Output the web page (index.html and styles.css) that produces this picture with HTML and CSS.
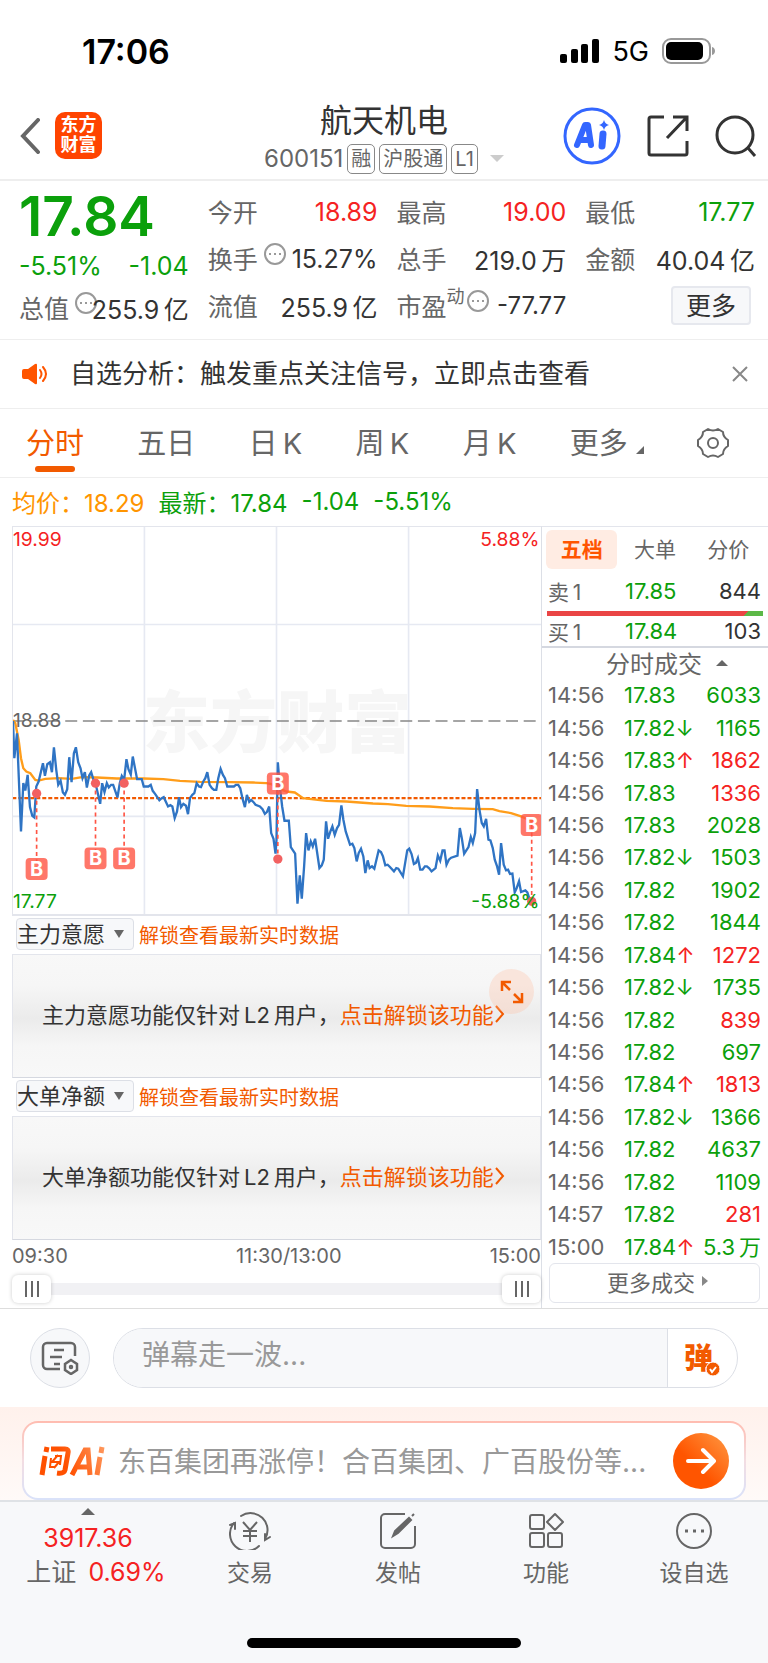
FILE: index.html
```html
<!DOCTYPE html>
<html lang="zh-CN">
<head>
    <meta charset="UTF-8">
    <meta name="viewport" content="width=device-width, initial-scale=1.0">
    <title>航天机电 600151</title>
    <link rel="stylesheet" href="styles.css">
</head>
<body>
    <div class="status-bar">
        <span class="clock">17:06</span>
        <div class="status-icons">
            <svg width="39" height="24" viewBox="0 0 39 24">
                <rect x="0" y="15" width="7" height="9" rx="2"/>
                <rect x="11" y="10" width="7" height="14" rx="2"/>
                <rect x="21" y="5" width="7" height="19" rx="2"/>
                <rect x="32" y="0" width="7" height="24" rx="2"/>
            </svg>
            <span class="network">5G</span>
            <svg width="54" height="26" viewBox="0 0 54 26">
                <rect x="1" y="1" width="47" height="24" rx="8" fill="none" stroke="#999" stroke-width="2"/>
                <rect x="4" y="4" width="37" height="18" rx="5"/>
                <path d="M50 9c4 1 4 7 0 8z" fill="#999"/>
            </svg>
        </div>
    </div>

    <header class="header">
        <div class="header-left">
            <button class="icon-btn" aria-label="返回">
                <svg width="20" height="36" viewBox="0 0 20 36"><path d="M18 2L3 18l15 16" fill="none" stroke="#666" stroke-width="4" stroke-linecap="round"/></svg>
            </button>
            <a class="app-logo" href="#">东方<br>财富</a>
        </div>
        <div class="stock">
            <h1>航天机电</h1>
            <div class="stock-code">
                <span>600151</span>
                <span class="tag">融</span>
                <span class="tag">沪股通</span>
                <span class="tag">L1</span>
                <i class="caret"></i>
            </div>
        </div>
        <div class="header-actions">
            <button class="icon-btn" aria-label="Ai">
                <svg width="58" height="58" viewBox="0 0 58 58">
                    <circle cx="29" cy="29" r="27" fill="none" stroke="#3366ff" stroke-width="3"/>
                    <path d="M14 38l8-20h3l3 20M18 33h9" fill="none" stroke="#3366ff" stroke-width="6" stroke-linejoin="round" stroke-linecap="round"/>
                    <path d="M40 27l-1 12" stroke="#3366ff" stroke-width="7" stroke-linecap="round"/>
                    <path d="M41 13c1 3 2 4 5 5-3 1-4 2-5 5-1-3-2-4-5-5 3-1 4-2 5-5z" fill="#3366ff"/>
                </svg>
            </button>
            <button class="icon-btn" aria-label="分享">
                <svg width="42" height="42" viewBox="0 0 42 42" fill="none" stroke="#333" stroke-width="3">
                    <path d="M17 2H4a2 2 0 0 0-2 2v34a2 2 0 0 0 2 2h34a2 2 0 0 0 2-2V26"/>
                    <path d="M26 2h14v14M40 2L20 23"/>
                </svg>
            </button>
            <button class="icon-btn" aria-label="搜索">
                <svg width="42" height="42" viewBox="0 0 42 42" fill="none" stroke="#333" stroke-width="3">
                    <circle cx="20" cy="20" r="18"/>
                    <path d="M33 33l7 8"/>
                </svg>
            </button>
        </div>
    </header>

    <section class="quote">
        <div class="quote-col quote-main">
            <div class="price down">17.84</div>
            <div class="row change down"><span>-5.51%</span><span>-1.04</span></div>
            <div class="row"><span class="label">总值<svg class="dots" viewBox="0 0 22 22"><circle cx="11" cy="11" r="10"/><path d="M5 11h2M10 11h2M15 11h2"/></svg></span><span>255.9&thinsp;亿</span></div>
        </div>
        <div class="quote-col">
            <div class="row"><span class="label">今开</span><span class="up">18.89</span></div>
            <div class="row"><span class="label">换手<svg class="dots" viewBox="0 0 22 22"><circle cx="11" cy="11" r="10"/><path d="M5 11h2M10 11h2M15 11h2"/></svg></span><span>15.27%</span></div>
            <div class="row"><span class="label">流值</span><span>255.9&thinsp;亿</span></div>
        </div>
        <div class="quote-col">
            <div class="row"><span class="label">最高</span><span class="up">19.00</span></div>
            <div class="row"><span class="label">总手</span><span>219.0&thinsp;万</span></div>
            <div class="row"><span class="label">市盈<sup>动</sup><svg class="dots" viewBox="0 0 22 22"><circle cx="11" cy="11" r="10"/><path d="M5 11h2M10 11h2M15 11h2"/></svg></span><span class="pe">-77.77</span></div>
        </div>
        <div class="quote-col">
            <div class="row"><span class="label">最低</span><span class="down">17.77</span></div>
            <div class="row"><span class="label">金额</span><span>40.04&thinsp;亿</span></div>
            <div class="row row-end"><button class="more-btn">更多</button></div>
        </div>
    </section>

    <section class="notice">
        <svg width="26" height="22" viewBox="0 0 26 22">
            <path d="M2 6h4l7-5q2-1 2 1v18q0 2-2 1l-7-5H2q-2 0-2-2V8q0-2 2-2z" fill="#ff5500"/>
            <path d="M18 7q3 4 0 8M21 4q6 7 0 14" fill="none" stroke="#ff5500" stroke-width="2" stroke-linecap="round"/>
        </svg>
        <p>自选分析：触发重点关注信号，立即点击查看</p>
        <button class="icon-btn" aria-label="关闭">
            <svg width="16" height="16" viewBox="0 0 16 16"><path d="M1 1l14 14M15 1L1 15" stroke="#888" stroke-width="2"/></svg>
        </button>
    </section>

    <nav class="tabs">
        <button class="tab active">分时</button>
        <button class="tab">五日</button>
        <button class="tab">日&thinsp;K</button>
        <button class="tab">周&thinsp;K</button>
        <button class="tab">月&thinsp;K</button>
        <button class="tab tab-more">更多<i></i></button>
        <button class="icon-btn" aria-label="设置">
            <svg width="32" height="32" viewBox="0 0 32 32" fill="none" stroke="#666" stroke-width="2">
                <path d="M11 2q5 3 10 0l5 3q0 5 5 8v6q-5 3-5 8l-5 3q-5-3-10 0l-5-3q0-5-5-8v-6q5-3 5-8z" stroke-linejoin="round"/>
                <circle cx="16" cy="16" r="5"/>
            </svg>
        </button>
    </nav>

    <main class="board">
        <div class="average">
            <span class="orange">均价：18.29</span>
            <span class="down">最新：17.84</span>
            <span class="down">-1.04</span>
            <span class="down">-5.51%</span>
        </div>
        <div class="board-body">
            <div class="charts">
                <svg class="trend" viewBox="38 20 1587 1164">
                    <text class="watermark" x="428" y="680">东方财富</text>
                    <!-- grid -->
                    <path class="grid" d="M433 20V1185M830 20V1185M1227 20V1185M36 313H1629M36 890H1629"/>
                    <path class="mid-line" d="M36 603H1623"/>
                    <path class="now-line" d="M36 835H1629"/>
                    <!-- average price -->
                    <polyline class="avg-line" points="38,600 45,610 55,660 62,715 69,745 78,755 90,760 105,780 115,782 135,777 175,775 215,777 245,772 290,773 350,776 430,776 490,778 540,783 600,786 690,787 760,788 800,790 815,793 834,805 860,815 885,818 910,835 980,843 1040,845 1120,851 1165,853 1220,858 1290,860 1360,865 1420,867 1480,868 1500,874 1535,880 1565,890 1600,905"/>
                    <!-- price -->
                    <polyline class="price-line" points="38,603 42,715 50,640 62,935 69,790 75,812 82,765 89,862 96,888 102,893 108,800 115,785 128,730 134,768 141,733 149,727 155,757 161,682 168,750 174,795 181,783 188,818 194,825 201,808 207,712 214,787 221,700 227,682 234,727 241,745 247,775 254,757 260,803 267,767 273,757 280,780 287,795 300,852 306,790 313,817 320,790 326,803 333,795 339,795 352,833 359,790 365,768 372,780 379,718 385,748 392,764 398,710 411,778 425,778 431,800 445,800 452,795 458,813 465,822 478,841 485,835 491,832 504,860 511,856 517,860 524,895 531,875 537,832 543,862 550,852 558,858 564,883 570,835 577,825 583,820 590,790 597,800 603,802 610,785 616,775 622,757 629,795 636,805 642,810 649,810 655,775 662,747 669,765 675,775 682,800 702,800 708,795 715,795 721,805 728,837 735,862 741,825 748,846 754,840 761,847 767,855 780,860 788,868 795,882 801,877 808,860 814,940 821,957 827,1002 830,960 834,727 840,800 847,860 854,903 867,903 873,982 886,1002 893,1152 900,1067 906,1137 913,1040 919,940 926,992 933,965 939,980 946,957 959,1045 966,1037 972,1020 979,905 985,957 992,935 998,920 1005,945 1012,925 1018,915 1025,857 1031,900 1038,935 1051,975 1058,972 1064,985 1071,1025 1077,1000 1084,987 1091,1010 1097,1060 1104,1022 1110,1045 1117,1040 1124,1047 1137,992 1144,997 1150,1010 1157,1037 1164,1035 1171,1042 1183,1055 1190,1045 1196,1047 1210,1070 1223,992 1229,987 1236,1003 1243,1033 1249,1030 1255,1015 1262,1050 1269,1050 1276,1040 1282,1040 1289,1046 1296,1055 1308,1045 1315,1007 1322,1023 1329,992 1335,992 1341,1035 1348,1020 1355,1014 1374,1008 1381,925 1387,955 1394,1002 1407,982 1414,952 1420,970 1427,940 1433,808 1440,870 1447,910 1453,920 1460,897 1467,960 1473,962 1480,985 1486,1020 1493,1040 1499,1065 1505,970 1513,1035 1520,1052 1526,1050 1532,1063 1539,1062 1546,1118 1552,1105 1559,1085 1565,1117 1578,1112 1584,1118 1591,1140 1598,1150"/>
                    <!-- axis labels -->
                    <text class="axis up" x="38" y="76">19.99</text>
                    <text class="axis up end" x="1620" y="76">5.88%</text>
                    <text class="axis mid" x="38" y="620">18.88</text>
                    <text class="axis down" x="38" y="1164">17.77</text>
                    <!-- buy markers -->
                    <g class="buy">
                        <path d="M109 821V1048M286 790V1016M372 790V1016M834 791V1018M1597 916V1145"/>
                        <circle cx="109" cy="821" r="14"/>
                        <circle cx="286" cy="790" r="14"/>
                        <circle cx="372" cy="790" r="14"/>
                        <circle cx="834" cy="1018" r="14"/>
                        <circle cx="1597" cy="1145" r="14"/>
                        <rect x="76" y="1015" width="66" height="66" rx="12"/><text x="109" y="1069">B</text>
                        <rect x="253" y="983" width="66" height="66" rx="12"/><text x="286" y="1037">B</text>
                        <rect x="339" y="983" width="66" height="66" rx="12"/><text x="372" y="1037">B</text>
                        <rect x="801" y="758" width="66" height="66" rx="12"/><text x="834" y="812">B</text>
                        <rect x="1564" y="883" width="66" height="66" rx="12"/><text x="1597" y="937">B</text>
                    </g>
                    <text class="axis down end" x="1620" y="1164">-5.88%</text>
                </svg>

                <div class="sub-head">
                    <div class="picker">
                        <select aria-label="指标一"><option>主力意愿</option></select>
                    </div>
                    <a href="#">解锁查看最新实时数据</a>
                </div>
                <div class="locked">
                    <p>主力意愿功能仅针对&thinsp;L2&thinsp;用户，<a href="#">点击解锁该功能<svg width="10" height="18" viewBox="0 0 10 18"><path d="M1 1l7 8-7 8" fill="none" stroke="#f25a00" stroke-width="2"/></svg></a></p>
                    <button class="expand" aria-label="全屏">
                        <svg width="24" height="24" viewBox="0 0 24 24" fill="none" stroke="#f25a00" stroke-width="2.5"><path d="M2 11V2h9M2 2l8 8M22 13v9h-9M22 22l-8-8"/></svg>
                    </button>
                </div>

                <div class="sub-head">
                    <div class="picker">
                        <select aria-label="指标二"><option>大单净额</option></select>
                    </div>
                    <a href="#">解锁查看最新实时数据</a>
                </div>
                <div class="locked">
                    <p>大单净额功能仅针对&thinsp;L2&thinsp;用户，<a href="#">点击解锁该功能<svg width="10" height="18" viewBox="0 0 10 18"><path d="M1 1l7 8-7 8" fill="none" stroke="#f25a00" stroke-width="2"/></svg></a></p>
                </div>

                <div class="times"><span>09:30</span><span class="noon">11:30/13:00</span><span>15:00</span></div>
                <div class="range">
                    <input type="range" aria-label="开始时间" min="0" max="100" value="0">
                    <input type="range" aria-label="结束时间" min="0" max="100" value="100">
                </div>
            </div>

            <aside class="depth">
                <div class="depth-tabs">
                    <button class="active">五档</button>
                    <button>大单</button>
                    <button>分价</button>
                </div>
                <div class="level"><span>卖&thinsp;1</span><span class="down">17.85</span><b>844</b></div>
                <div class="ratio"></div>
                <div class="level level-buy"><span>买&thinsp;1</span><span class="down">17.84</span><b>103</b></div>
                <button class="deals-title">分时成交<i></i></button>
                <table class="deals">
                    <tr><td>14:56</td><td>17.83</td><td class="down">6033</td></tr>
                    <tr><td>14:56</td><td>17.82↓</td><td class="down">1165</td></tr>
                    <tr><td>14:56</td><td>17.83<span class="up">↑</span></td><td class="up">1862</td></tr>
                    <tr><td>14:56</td><td>17.83</td><td class="up">1336</td></tr>
                    <tr><td>14:56</td><td>17.83</td><td class="down">2028</td></tr>
                    <tr><td>14:56</td><td>17.82↓</td><td class="down">1503</td></tr>
                    <tr><td>14:56</td><td>17.82</td><td class="down">1902</td></tr>
                    <tr><td>14:56</td><td>17.82</td><td class="down">1844</td></tr>
                    <tr><td>14:56</td><td>17.84<span class="up">↑</span></td><td class="up">1272</td></tr>
                    <tr><td>14:56</td><td>17.82↓</td><td class="down">1735</td></tr>
                    <tr><td>14:56</td><td>17.82</td><td class="up">839</td></tr>
                    <tr><td>14:56</td><td>17.82</td><td class="down">697</td></tr>
                    <tr><td>14:56</td><td>17.84<span class="up">↑</span></td><td class="up">1813</td></tr>
                    <tr><td>14:56</td><td>17.82↓</td><td class="down">1366</td></tr>
                    <tr><td>14:56</td><td>17.82</td><td class="down">4637</td></tr>
                    <tr><td>14:56</td><td>17.82</td><td class="down">1109</td></tr>
                    <tr><td>14:57</td><td>17.82</td><td class="up">281</td></tr>
                    <tr><td>15:00</td><td>17.84<span class="up">↑</span></td><td class="down">5.3&thinsp;万</td></tr>
                </table>
                <button class="more-deals">更多成交<i></i></button>
            </aside>
        </div>
    </main>

    <section class="comment">
        <button class="comment-set" aria-label="弹幕设置">
            <svg width="38" height="34" viewBox="0 0 38 34" fill="none" stroke="#666" stroke-width="2.5">
                <path d="M19 28H6a4 4 0 0 1-4-4V6a4 4 0 0 1 4-4h24a4 4 0 0 1 4 4v9"/>
                <path d="M13 9h10M9 16h12M13 23h6"/>
                <path d="M30 19l6 4v6l-6 4-6-4v-6z"/>
                <circle cx="30" cy="26" r="1"/>
            </svg>
        </button>
        <div class="comment-box">
            <input type="text" placeholder="弹幕走一波..." aria-label="弹幕">
            <button aria-label="弹幕开关">
                <span>弹</span>
                <svg width="16" height="16" viewBox="0 0 16 16"><circle cx="8" cy="8" r="7" fill="#f25a00" stroke="#fff"/><path d="M5 8l2 3 4-5" fill="none" stroke="#fff" stroke-width="2"/></svg>
            </button>
        </div>
    </section>

    <section class="ask">
        <div class="ask-card">
            <svg width="66" height="30" viewBox="0 0 66 30" fill="none" stroke="url(#askFill)" stroke-width="5">
                <defs>
                    <linearGradient id="askFill" gradientUnits="userSpaceOnUse" x1="0" y1="30" x2="66" y2="0">
                        <stop offset="0.4" stop-color="#ff5000"/>
                        <stop offset="1" stop-color="#ff9a60"/>
                    </linearGradient>
                </defs>
                <path d="M6 10L3 29M8 1l-1 5M12 3h14q4 0 3 4l-3 17q-1 4-8 3"/>
                <path d="M19 9l-6 7h7l-5 6M12 12l-1 9h5M16 10h6l-1 9" stroke-width="2"/>
                <path d="M33 29L46 4h3l2 25M39 21h11"/>
                <path d="M61 11l-3 18M63 1l-1 6"/>
            </svg>
            <p>东百集团再涨停！合百集团、广百股份等...</p>
            <button class="ask-go" aria-label="提问">
                <svg width="30" height="28" viewBox="0 0 30 28"><path d="M2 14h25M17 3l11 11-11 11" fill="none" stroke="#fff" stroke-width="4" stroke-linecap="round" stroke-linejoin="round"/></svg>
            </button>
        </div>
    </section>

    <footer class="footer">
        <a class="index" href="#">
            <i></i>
            <span class="up">3917.36</span>
            <span class="index-name">上证<span class="up">0.69%</span></span>
        </a>
        <a href="#">
            <svg width="42" height="38" viewBox="0 0 42 38" fill="none" stroke="#666" stroke-width="2">
                <path d="M12 4A17 17 0 0 1 36 27M30 34A17 17 0 0 1 5 11M1 13l5-2v6M41 25l-5 3v-6" stroke-linecap="round"/>
                <path d="M14 10l7 8 7-8M21 18v12M14 19h14M14 24h14"/>
            </svg>
            <span>交易</span>
        </a>
        <a href="#">
            <svg width="38" height="38" viewBox="0 0 38 38" fill="none" stroke="#666" stroke-width="2">
                <path d="M26 2H6a4 4 0 0 0-4 4v26a4 4 0 0 0 4 4h26a4 4 0 0 0 4-4V14"/>
                <path d="M14 24l2-5L30 6l2 2-13 13zM33 4l2-2" fill="#666"/>
            </svg>
            <span>发帖</span>
        </a>
        <a href="#">
            <svg width="36" height="38" viewBox="0 0 36 38" fill="none" stroke="#666" stroke-width="2">
                <rect x="2" y="3" width="14" height="14" rx="2"/>
                <rect x="2" y="21" width="14" height="14" rx="2"/>
                <rect x="20" y="21" width="14" height="14" rx="2"/>
                <path d="M27 2l8 8-8 8-8-8z" stroke-linejoin="round"/>
            </svg>
            <span>功能</span>
        </a>
        <a href="#">
            <svg width="38" height="38" viewBox="0 0 38 38" fill="none" stroke="#666" stroke-width="2">
                <circle cx="19" cy="19" r="17"/>
                <path d="M10 19h3M18 19h3M26 19h3" stroke-width="3"/>
            </svg>
            <span>设自选</span>
        </a>
        <div class="home-bar"></div>
    </footer>
</body>
</html>
```

FILE: styles.css
```css
* {
    box-sizing: border-box;
}

body {
    font-family: Inter, "Noto Sans CJK SC", sans-serif;
    margin: 0;
    background-color: #fff;
    color: #333;
    font-size: 24px;
}

h1, p {
    margin: 0;
    font-weight: 400;
}

button {
    font: inherit;
    color: inherit;
    border: 0;
    padding: 0;
    background: none;
    cursor: pointer;
}

a {
    color: inherit;
    text-decoration: none;
}

svg {
    display: block;
    flex-shrink: 0;
}

.up {
    color: #f52222;
}

.down {
    color: #0ba00b;
}

.orange {
    color: #ff9500;
}

/* Status bar */
.status-bar {
    display: flex;
    justify-content: space-between;
    align-items: center;
    height: 102px;
    padding: 0 52px 0 82px;
    color: #000;
}

.clock {
    font-size: 34px;
    font-weight: 600;
}

.status-icons {
    display: flex;
    align-items: center;
    gap: 13px;
}

.network {
    font-size: 27px;
}

/* Header */
.header {
    display: grid;
    grid-template-columns: 1fr auto 1fr;
    align-items: center;
    height: 79px;
    padding: 0 11px;
    border-bottom: 2px solid #eee;
}

.header-left {
    display: flex;
    align-items: center;
    gap: 15px;
    padding: 0 0 10px 9px;
}

.app-logo {
    width: 47px;
    height: 47px;
    padding-top: 3px;
    border-radius: 10px;
    background-color: #ff4400;
    color: #fff;
    font-size: 18px;
    font-weight: 700;
    line-height: 20px;
    text-align: center;
}

.stock {
    text-align: center;
}

.stock h1 {
    font-size: 32px;
    line-height: 36px;
}

.stock-code {
    display: flex;
    align-items: center;
    gap: 4px;
    height: 40px;
    font-size: 24px;
    color: #666;
}

.tag {
    padding: 0 3px;
    border: 1px solid #888;
    border-radius: 5px;
    font-size: 20px;
    line-height: 28px;
}

.caret {
    margin-left: 8px;
    border: 7px solid transparent;
    border-top-color: #ccc;
    border-bottom: 0;
}

.header-actions {
    display: flex;
    justify-content: flex-end;
    align-items: center;
    gap: 26px;
    padding-bottom: 10px;
}

/* Quote */
.quote {
    display: grid;
    grid-template-columns: repeat(4, 1fr);
    gap: 19px;
    padding: 8px 13px 9px 19px;
    border-bottom: 1px solid #eee;
    font-size: 25px;
}

.quote-col {
    min-width: 0;
}

.row {
    display: flex;
    justify-content: space-between;
    align-items: center;
    height: 47px;
    padding-bottom: 2px;
    white-space: nowrap;
}

.label {
    display: flex;
    align-items: center;
    padding-bottom: 2px;
    color: #666;
}

.label sup {
    font-size: 18px;
    line-height: 18px;
    padding-bottom: 16px;
}

.dots {
    width: 22px;
    height: 22px;
    margin: 0 -28px 8px 6px;
    fill: none;
    stroke: #999;
    stroke-width: 2;
}

sup + .dots {
    margin-left: 2px;
}

.pe {
    font-size: 24px;
}

.price {
    height: 54px;
    font-size: 55px;
    font-weight: 600;
    line-height: 54px;
}

.quote-main .row {
    height: 40px;
}

.quote-main .change {
    height: 46px;
    padding-bottom: 0;
}

.row-end {
    justify-content: flex-end;
}

.more-btn {
    width: 80px;
    height: 39px;
    margin-right: 4px;
    border: 2px solid #e6e8ee;
    border-radius: 4px;
    background-color: #f7f8fa;
    line-height: 32px;
}

/* Notice */
.notice {
    display: flex;
    align-items: center;
    height: 69px;
    padding: 0 20px 0 22px;
    border-bottom: 1px solid #eee;
    font-size: 26px;
}

.notice p {
    flex: 1;
    padding: 0 0 5px 22px;
}

/* Tabs */
.tabs {
    display: flex;
    justify-content: space-between;
    align-items: center;
    height: 69px;
    padding: 0 39px 0 26px;
    border-bottom: 1px solid #eee;
    color: #666;
    font-size: 29px;
}

.tab {
    position: relative;
    height: 68px;
    padding-bottom: 5px;
}

.tab.active {
    color: #f25a00;
}

.tab.active::after {
    content: "";
    position: absolute;
    left: 9px;
    right: 9px;
    bottom: 5px;
    height: 6px;
    border-radius: 3px;
    background-color: #f25a00;
}

.tab-more i {
    display: inline-block;
    margin-left: 8px;
    border-left: 8px solid transparent;
    border-bottom: 8px solid #666;
}

/* Board */
.board {
    padding-bottom: 5px;
    border-bottom: 1px solid #ddd;
}

.average {
    display: flex;
    align-items: center;
    gap: 14px;
    height: 48px;
    padding: 0 0 2px 12px;
    font-size: 24px;
}

.board-body {
    display: flex;
}

.charts {
    flex: 1;
    min-width: 0;
    padding-left: 12px;
}

.trend {
    width: 100%;
    border: 1px solid #e3e5ec;
    border-right: 0;
    border-bottom-width: 2px;
}

.trend path,
.trend polyline {
    fill: none;
}

.watermark {
    font-size: 202px;
    font-weight: 900;
    fill: #f6f6f6;
}

.grid {
    stroke: #e6e9f2;
    stroke-width: 5;
}

.mid-line {
    stroke: #888;
    stroke-width: 5;
    stroke-dasharray: 36 17;
}

.now-line {
    stroke: #f25a00;
    stroke-width: 7;
    stroke-dasharray: 12 6;
}

.avg-line {
    stroke: #ff9d1a;
    stroke-width: 7;
}

.price-line {
    stroke: #2f74c4;
    stroke-width: 7;
}

.axis {
    font-size: 58px;
    fill: currentColor;
}

.axis.mid {
    fill: #666;
}

.axis.end {
    text-anchor: end;
}

.buy path {
    stroke: #ff5544;
    stroke-width: 5;
    stroke-dasharray: 12 10;
}

.buy circle {
    fill: #f26161;
}

.buy rect {
    fill: #ff5544;
    fill-opacity: 0.8;
}

.buy text {
    font-size: 60px;
    font-weight: 700;
    text-anchor: middle;
    fill: #fff;
}

.sub-head {
    display: flex;
    align-items: center;
    gap: 5px;
    height: 38px;
    padding: 0 0 2px 4px;
    color: #f25a00;
    font-size: 20px;
}

.picker {
    position: relative;
}

.picker select {
    display: block;
    appearance: none;
    width: 118px;
    height: 32px;
    padding: 0;
    border: 1px solid #dcdfe6;
    border-radius: 4px;
    background-color: #f7f8fa;
    color: #333;
    font: inherit;
    font-size: 22px;
}

.picker::after {
    content: "";
    position: absolute;
    right: 10px;
    top: 12px;
    border: 5px solid transparent;
    border-top: 8px solid #666;
    border-bottom: 0;
}

.locked {
    position: relative;
    display: flex;
    align-items: center;
    height: 124px;
    padding: 0 0 6px 29px;
    border: 1px solid #e3e5ec;
    border-bottom-color: #d5d8e0;
    background: linear-gradient(#f8f8f8, #f6f6f6 25%, #ebebeb 52%, #f6f6f6 75%, #f8f8f8);
    font-size: 22px;
    white-space: nowrap;
}

.locked a {
    color: #f25a00;
}

.locked a svg {
    display: inline-block;
    margin-left: 1px;
}

.expand {
    position: absolute;
    right: 6px;
    top: 14px;
    display: flex;
    align-items: center;
    justify-content: center;
    width: 45px;
    height: 45px;
    border-radius: 50%;
    background-color: rgba(255, 190, 160, 0.3);
}

.times {
    display: flex;
    justify-content: space-between;
    height: 35px;
    color: #666;
    font-size: 20px;
    line-height: 32px;
}

.noon {
    padding-left: 20px;
}

.range {
    position: relative;
    height: 28px;
    background: linear-gradient(#f1f1f4, #f1f1f4) center / 100% 12px no-repeat;
}

.range input {
    position: absolute;
    left: 0;
    top: 0;
    width: 100%;
    height: 28px;
    margin: 0;
    appearance: none;
    background: none;
    pointer-events: none;
}

.range input::-webkit-slider-thumb {
    appearance: none;
    width: 39px;
    height: 28px;
    border-radius: 6px;
    background: linear-gradient(90deg, #666 2px, transparent 2px 6px, #666 6px 8px, transparent 8px 12px, #666 12px) center / 14px 16px no-repeat #fff;
    box-shadow: 0 0 4px rgba(0, 0, 0, 0.2);
    pointer-events: auto;
}

/* Depth */
.depth {
    width: 227px;
    margin-bottom: -5px;
    border-left: 1px solid #dcdfe6;
    border-top: 1px solid #e3e5ec;
    font-size: 22px;
}

.depth-tabs {
    display: flex;
    gap: 2px;
    padding: 3px 4px 0;
    color: #666;
    font-size: 21px;
}

.depth-tabs button {
    flex: 1;
    height: 39px;
    border-radius: 6px;
    line-height: 36px;
}

.depth-tabs .active {
    background-color: #ffece3;
    color: #ff5500;
    font-weight: 700;
}

.level {
    display: grid;
    grid-template-columns: 77px 1fr auto;
    align-items: center;
    height: 42px;
    padding: 2px 7px 0 6px;
}

.level span:first-child {
    color: #666;
    font-size: 21px;
}

.level b {
    font-weight: 400;
}

.ratio {
    height: 5px;
    margin: 0 5px;
    background: linear-gradient(135deg, #ea4545 0 91%, #5cb847 91%);
}

.level-buy {
    height: 30px;
    padding-top: 0;
}

.deals-title {
    display: flex;
    align-items: center;
    justify-content: center;
    gap: 14px;
    width: 100%;
    height: 33px;
    padding: 0 0 2px 24px;
    border-top: 2px solid #d5d8e0;
    color: #666;
    font-size: 24px;
}

.deals-title i {
    border: 6px solid transparent;
    border-bottom-color: #666;
    border-top: 0;
}

.deals {
    width: 100%;
    height: 584px;
    border-collapse: collapse;
    color: #666;
    line-height: 30px;
}

.deals td {
    padding: 0;
}

.deals td:first-child {
    width: 82px;
    padding-left: 6px;
}

.deals td:nth-child(2) {
    color: #0ba00b;
}

.deals td:last-child {
    padding-right: 7px;
    text-align: right;
}

.more-deals {
    display: flex;
    align-items: center;
    justify-content: center;
    gap: 7px;
    width: 211px;
    height: 40px;
    margin-left: 7px;
    padding: 0 0 4px 6px;
    border: 1px solid #e3e5ec;
    border-radius: 6px;
    color: #666;
}

.more-deals i {
    border: 5px solid transparent;
    border-left: 6px solid #888;
    border-right: 0;
}

/* Comment */
.comment {
    display: flex;
    align-items: center;
    gap: 23px;
    height: 98px;
    padding: 0 30px;
}

.comment-set {
    display: flex;
    align-items: center;
    justify-content: center;
    width: 60px;
    height: 60px;
    border: 1px solid #dcdfe6;
    border-radius: 50%;
    background-color: #f7f8fa;
}

.comment-box {
    display: flex;
    flex: 1;
    height: 60px;
    border: 1px solid #dcdfe6;
    border-radius: 30px;
    overflow: hidden;
}

.comment-box input {
    flex: 1;
    min-width: 0;
    padding: 0 0 6px 28px;
    border: 0;
    background-color: #f7f8fa;
    font: inherit;
    font-size: 28px;
}

.comment-box input::placeholder {
    color: #999;
}

.comment-box button {
    position: relative;
    width: 70px;
    padding: 0 8px 4px 0;
    border-left: 1px solid #dcdfe6;
    color: #f25a00;
    font-size: 29px;
    font-weight: 900;
}

.comment-box button svg {
    position: absolute;
    right: 16px;
    bottom: 10px;
}

/* Ask */
.ask {
    padding: 14px 22px 0;
    background: linear-gradient(#fff1ec, #fffaf8);
}

.ask-card {
    display: flex;
    align-items: center;
    height: 79px;
    padding: 0 15px;
    border: 2px solid transparent;
    border-radius: 16px;
    background: linear-gradient(#fff, #fff) padding-box, linear-gradient(#ffbcb0, #f3dde2 50%, #d9e2fa) border-box;
}

.ask-card p {
    flex: 1;
    padding: 0 0 2px 13px;
    color: #999;
    font-size: 28px;
    white-space: nowrap;
}

.ask-go {
    display: flex;
    align-items: center;
    justify-content: center;
    width: 56px;
    height: 56px;
    border-radius: 50%;
    background: linear-gradient(45deg, #ff5500 40%, #ff9a44);
}

/* Footer */
.footer {
    position: relative;
    display: flex;
    height: 165px;
    padding-top: 10px;
    border-top: 2px solid #dfe2e6;
    background-color: #f7f8fa;
    color: #666;
}

.footer a {
    display: flex;
    flex: 148;
    flex-direction: column;
    align-items: center;
    gap: 6px;
    font-size: 23px;
    line-height: 34px;
}

.footer .index {
    flex: 176;
    gap: 0;
    font-size: 25px;
}

.index i {
    margin-top: -4px;
    margin-bottom: 6px;
    border: 7px solid transparent;
    border-bottom-color: #666;
    border-top: 0;
}

.index-name {
    display: flex;
    gap: 12px;
    padding-left: 16px;
}

.home-bar {
    position: absolute;
    left: 50%;
    bottom: 17px;
    width: 274px;
    height: 10px;
    margin-left: -137px;
    border-radius: 5px;
    background-color: #000;
}
```
